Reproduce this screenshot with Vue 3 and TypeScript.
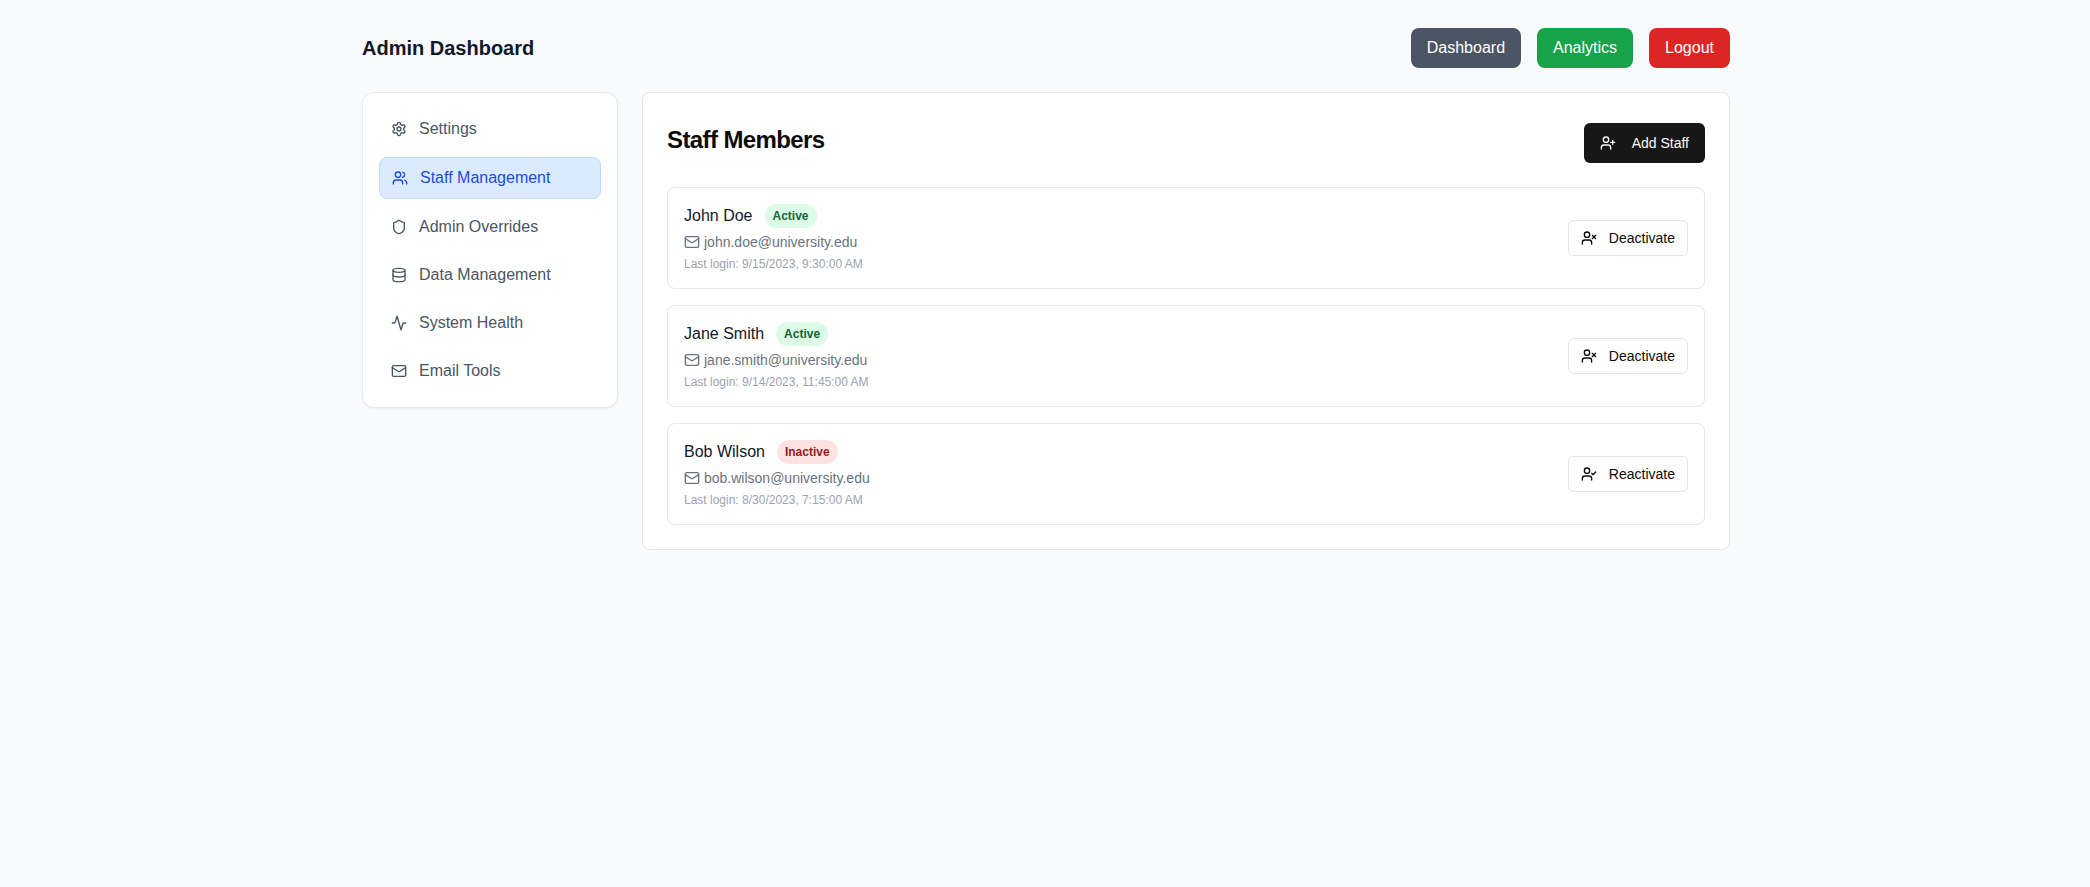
<script setup lang="ts">
import { h, type FunctionalComponent } from 'vue'

type IconName =
  | 'settings' | 'users' | 'shield' | 'database' | 'activity'
  | 'mail' | 'userPlus' | 'userX' | 'userCheck'

type Shape = [tag: string, attrs: Record<string, string>]

const person: Shape[] = [
  ['path', { d: 'M16 21v-2a4 4 0 0 0-4-4H6a4 4 0 0 0-4 4v2' }],
  ['circle', { cx: '9', cy: '7', r: '4' }],
]

const shapes: Record<IconName, Shape[]> = {
  settings: [
    ['path', { d: 'M12.22 2h-.44a2 2 0 0 0-2 2v.18a2 2 0 0 1-1 1.73l-.43.25a2 2 0 0 1-2 0l-.15-.08a2 2 0 0 0-2.73.73l-.22.38a2 2 0 0 0 .73 2.73l.15.1a2 2 0 0 1 1 1.72v.51a2 2 0 0 1-1 1.74l-.15.09a2 2 0 0 0-.73 2.73l.22.38a2 2 0 0 0 2.73.73l.15-.08a2 2 0 0 1 2 0l.43.25a2 2 0 0 1 1 1.73V20a2 2 0 0 0 2 2h.44a2 2 0 0 0 2-2v-.18a2 2 0 0 1 1-1.73l.43-.25a2 2 0 0 1 2 0l.15.08a2 2 0 0 0 2.73-.73l.22-.39a2 2 0 0 0-.73-2.73l-.15-.08a2 2 0 0 1-1-1.74v-.5a2 2 0 0 1 1-1.74l.15-.09a2 2 0 0 0 .73-2.73l-.22-.38a2 2 0 0 0-2.73-.73l-.15.08a2 2 0 0 1-2 0l-.43-.25a2 2 0 0 1-1-1.73V4a2 2 0 0 0-2-2z' }],
    ['circle', { cx: '12', cy: '12', r: '3' }],
  ],
  users: [
    ...person,
    ['path', { d: 'M22 21v-2a4 4 0 0 0-3-3.87' }],
    ['path', { d: 'M16 3.13a4 4 0 0 1 0 7.75' }],
  ],
  shield: [
    ['path', { d: 'M20 13c0 5-3.5 7.5-7.66 8.95a1 1 0 0 1-.67-.01C7.5 20.5 4 18 4 13V6a1 1 0 0 1 1-1c2 0 4.5-1.2 6.24-2.72a1.17 1.17 0 0 1 1.52 0C14.51 3.81 17 5 19 5a1 1 0 0 1 1 1z' }],
  ],
  database: [
    ['ellipse', { cx: '12', cy: '5', rx: '9', ry: '3' }],
    ['path', { d: 'M3 5v14a9 3 0 0 0 18 0V5' }],
    ['path', { d: 'M3 12a9 3 0 0 0 18 0' }],
  ],
  activity: [
    ['path', { d: 'M22 12h-2.48a2 2 0 0 0-1.93 1.46l-2.35 8.36a.25.25 0 0 1-.48 0L9.24 2.18a.25.25 0 0 0-.48 0l-2.35 8.36A2 2 0 0 1 4.49 12H2' }],
  ],
  mail: [
    ['rect', { width: '20', height: '16', x: '2', y: '4', rx: '2' }],
    ['path', { d: 'm22 7-8.97 5.7a1.94 1.94 0 0 1-2.06 0L2 7' }],
  ],
  userPlus: [
    ...person,
    ['path', { d: 'M19 8v6M22 11h-6' }],
  ],
  userX: [
    ...person,
    ['path', { d: 'm17 8 5 5M22 8l-5 5' }],
  ],
  userCheck: [
    ...person,
    ['path', { d: 'm16 11 2 2 4-4' }],
  ],
}

const Icon: FunctionalComponent<{ name: IconName }> = (props) =>
  h(
    'svg',
    {
      width: 16,
      height: 16,
      viewBox: '0 0 24 24',
      fill: 'none',
      stroke: 'currentColor',
      'stroke-width': 2,
      'stroke-linecap': 'round',
      'stroke-linejoin': 'round',
      'aria-hidden': 'true',
    },
    shapes[props.name].map(([tag, attrs]) => h(tag, attrs)),
  )
Icon.props = ['name']

const navItems: { label: string; icon: IconName; active?: boolean }[] = [
  { label: 'Settings', icon: 'settings' },
  { label: 'Staff Management', icon: 'users', active: true },
  { label: 'Admin Overrides', icon: 'shield' },
  { label: 'Data Management', icon: 'database' },
  { label: 'System Health', icon: 'activity' },
  { label: 'Email Tools', icon: 'mail' },
]

interface Staff {
  name: string
  email: string
  lastLogin: string
  active: boolean
}

const staff: Staff[] = [
  { name: 'John Doe', email: 'john.doe@university.edu', lastLogin: '9/15/2023, 9:30:00 AM', active: true },
  { name: 'Jane Smith', email: 'jane.smith@university.edu', lastLogin: '9/14/2023, 11:45:00 AM', active: true },
  { name: 'Bob Wilson', email: 'bob.wilson@university.edu', lastLogin: '8/30/2023, 7:15:00 AM', active: false },
]
</script>

<template>
  <div class="page">
    <div class="container">
      <header class="topbar">
        <h1>Admin Dashboard</h1>
        <div class="actions">
          <button class="action gray">Dashboard</button>
          <button class="action green">Analytics</button>
          <button class="action red">Logout</button>
        </div>
      </header>

      <div class="layout">
        <nav class="sidebar">
          <button
            v-for="item in navItems"
            :key="item.label"
            class="nav-item"
            :class="{ active: item.active }"
          >
            <Icon :name="item.icon" />
            <span>{{ item.label }}</span>
          </button>
        </nav>

        <main class="panel">
          <div class="panel-head">
            <h2>Staff Members</h2>
            <button class="add"><Icon name="userPlus" />Add Staff</button>
          </div>
          <div class="list">
            <article v-for="s in staff" :key="s.email" class="card">
              <div class="info">
                <div class="name-row">
                  <span class="name">{{ s.name }}</span>
                  <span class="badge" :class="s.active ? 'on' : 'off'">{{ s.active ? 'Active' : 'Inactive' }}</span>
                </div>
                <div class="email"><Icon name="mail" />{{ s.email }}</div>
                <div class="login">Last login: {{ s.lastLogin }}</div>
              </div>
              <button class="toggle">
                <Icon :name="s.active ? 'userX' : 'userCheck'" />{{ s.active ? 'Deactivate' : 'Reactivate' }}
              </button>
            </article>
          </div>
        </main>
      </div>
    </div>
  </div>
</template>

<style>
body {
  background: #f9fafb;
}
</style>

<style scoped>
.page,
.page * {
  box-sizing: border-box;
}
.page {
  min-height: 100vh;
  padding: 28px 0 0 2px;
  background: #f9fafb;
  color: #0a0a0a;
  font-family: "Liberation Sans", Arial, sans-serif;
  font-size: 16px;
  line-height: 24px;
}
.container {
  width: 1368px;
  margin: 0 auto;
}
h1,
h2 {
  margin: 0;
}
button {
  margin: 0;
  border: 0;
  font: inherit;
  cursor: pointer;
  white-space: nowrap;
}
svg {
  flex: none;
}
.topbar {
  display: flex;
  justify-content: space-between;
  align-items: center;
  height: 40px;
  margin-bottom: 24px;
}
h1 {
  font-size: 20px;
  line-height: 28px;
  font-weight: 700;
  color: #111827;
}
.actions {
  display: flex;
  gap: 16px;
}
.action {
  padding: 8px 16px;
  border-radius: 8px;
  color: #fff;
}
.gray {
  background: #4b5563;
}
.green {
  background: #16a34a;
}
.red {
  background: #dc2626;
}
.layout {
  display: flex;
  align-items: flex-start;
  gap: 24px;
}
.sidebar {
  flex: none;
  display: flex;
  flex-direction: column;
  gap: 8px;
  width: 256px;
  padding: 16px;
  border: 1px solid #e5e7eb;
  border-radius: 12px;
  background: #fff;
  box-shadow: 0 1px 2px rgba(0, 0, 0, 0.05);
}
.nav-item {
  display: flex;
  align-items: center;
  gap: 12px;
  padding: 8px 12px;
  border-radius: 8px;
  background: transparent;
  color: #4b5563;
  text-align: left;
}
.nav-item.active {
  border: 1px solid #bfdbfe;
  background: #dbeafe;
  color: #1d4ed8;
}
.panel {
  flex: 1;
  padding: 24px;
  border: 1px solid #e5e5e5;
  border-radius: 8px;
  background: #fff;
}
.panel-head {
  display: flex;
  align-items: center;
  justify-content: space-between;
  padding-bottom: 24px;
}
h2 {
  font-size: 24px;
  line-height: 24px;
  font-weight: 600;
  letter-spacing: -0.6px;
}
.add {
  display: flex;
  align-items: center;
  gap: 16px;
  height: 40px;
  margin-top: 6px;
  padding: 0 16px;
  border-radius: 6px;
  background: #171717;
  color: #fafafa;
  font-size: 14px;
  line-height: 20px;
}
.list {
  display: flex;
  flex-direction: column;
  gap: 16px;
}
.card {
  display: flex;
  align-items: center;
  justify-content: space-between;
  padding: 16px;
  border: 1px solid #e5e7eb;
  border-radius: 8px;
}
.info {
  display: flex;
  flex-direction: column;
  gap: 4px;
}
.name-row {
  display: flex;
  align-items: center;
  gap: 12px;
}
.name {
  color: #111827;
}
.badge {
  padding: 4px 8px;
  border-radius: 12px;
  font-size: 12px;
  line-height: 16px;
  font-weight: 600;
}
.on {
  background: #dcfce7;
  color: #166534;
}
.off {
  background: #fee2e2;
  color: #991b1b;
}
.email {
  display: flex;
  align-items: center;
  gap: 4px;
  color: #6b7280;
  font-size: 14px;
  line-height: 20px;
}
.login {
  color: #9ca3af;
  font-size: 12px;
  line-height: 16px;
}
.toggle {
  display: flex;
  align-items: center;
  gap: 12px;
  height: 36px;
  padding: 0 12px;
  border: 1px solid #e5e5e5;
  border-radius: 6px;
  background: #fff;
  color: #0a0a0a;
  font-size: 14px;
  line-height: 20px;
}
</style>
